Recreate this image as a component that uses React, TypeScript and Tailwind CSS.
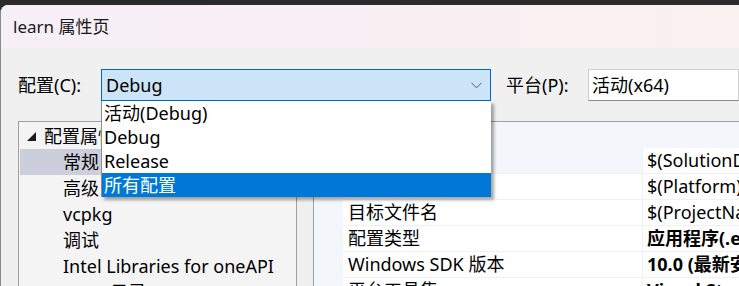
const font = { fontFamily: '"Noto Sans", "Noto Sans CJK SC", sans-serif' };

const treeItems = [
  { label: '常规', selected: true },
  { label: '高级' },
  { label: 'vcpkg' },
  { label: '调试' },
  { label: 'Intel Libraries for oneAPI' },
  { label: 'VC++ 目录' },
];

const props = [
  { name: '输出目录', value: '$(SolutionDir)$(Platform)\\$(Configuration)\\', shaded: true },
  { name: '中间目录', value: '$(Platform)\\$(Configuration)\\' },
  { name: '目标文件名', value: '$(ProjectName)' },
  { name: '配置类型', value: '应用程序(.exe)', bold: true },
  { name: 'Windows SDK 版本', value: '10.0 (最新安装的版本)', bold: true },
  { name: '平台工具集', value: 'Visual Studio 2022 (v143)', bold: true },
];

const options = ['活动(Debug)', 'Debug', 'Release', '所有配置'];

export default function App() {
  return (
    <div className="relative w-[739px] h-[286px] overflow-hidden bg-[#2b2b2b] pt-[5px] text-black" style={font}>
      <div className="h-full rounded-tl-[8px] overflow-hidden border-l border-[#8a8a8a] bg-[#f0f0f0] flex flex-col">
        <div className="h-[43px] shrink-0 bg-gradient-to-r from-[#f6eff6] to-[#f9f0f0] flex items-center pl-3 text-[17px] text-[#1a1a1a]">
          learn 属性页
        </div>

        <div className="flex items-center h-[32px] mt-[21px] text-[18px] shrink-0">
          <span className="w-[100px] shrink-0 pl-[17px]">配置(C):</span>
          <div className="w-[390px] shrink-0 h-[32px] border border-[#0067c0] bg-[#cce4f7] flex items-center justify-between pl-[4px] pr-[8px]">
            <span>Debug</span>
            <svg width="11" height="7" viewBox="0 0 11 7" fill="none" stroke="#5a5a5a" strokeWidth="1">
              <path d="M0.5 0.8 L5.5 5.8 L10.5 0.8" />
            </svg>
          </div>
          <span className="ml-[15px] w-[82px] shrink-0">平台(P):</span>
          <div className="flex-1 h-[32px] border border-[#cfcfcf] border-b-[#8a8a8a] bg-white flex items-center pl-[3px] whitespace-nowrap">
            活动(x64)
          </div>
        </div>

        <div className="flex mt-[20px] flex-1 min-h-0">
          <div className="ml-[17px] w-[279px] shrink-0 border-l border-t border-r border-[#a0a0a0] bg-[#f4f4f4] pl-px pt-px text-[18px]">
            <div className="h-[26px] flex items-center">
              <svg width="9" height="9" viewBox="0 0 9 9" className="ml-[7px] mr-[8px]">
                <polygon points="9,0 9,9 0,9" fill="#1a1a1a" />
              </svg>
              <span>配置属性</span>
            </div>
            {treeItems.map((item) => (
              <div
                key={item.label}
                className={`h-[26px] flex items-center pl-[43px] whitespace-nowrap ${item.selected ? 'bg-[#cccedb]' : ''}`}
              >
                {item.label}
              </div>
            ))}
          </div>

          <div className="ml-[16px] flex-1 min-w-0 border-l border-t border-[#a0a0a0] bg-[#f3f6fb] pt-[26px] text-[18px]">
            {props.map((p) => (
              <div key={p.name} className="flex h-[26px] ml-[29px] border-b border-[#eef1f5]">
                <div className={`w-[299px] shrink-0 flex items-center pl-[5px] whitespace-nowrap ${p.shaded ? 'bg-[#f3f6fb]' : 'bg-white'}`}>
                  {p.name}
                </div>
                <div className={`flex-1 min-w-0 flex items-center pl-[4px] bg-white whitespace-nowrap overflow-hidden border-l border-[#eef1f5] ${p.bold ? 'font-bold' : ''}`}>
                  {p.value}
                </div>
              </div>
            ))}
          </div>
        </div>
      </div>

      <div className="absolute left-[101px] top-[101px] w-[390px] bg-white border-l border-[#8c8c8c] shadow-[3px_3px_3px_rgba(0,0,0,0.35)] text-[18px]">
        {options.map((o, i) => (
          <div
            key={o}
            className={`h-[24px] flex items-center pl-[2px] ${i === options.length - 1 ? 'bg-[#0078d7] text-white' : ''}`}
          >
            {o}
          </div>
        ))}
      </div>
    </div>
  );
}
